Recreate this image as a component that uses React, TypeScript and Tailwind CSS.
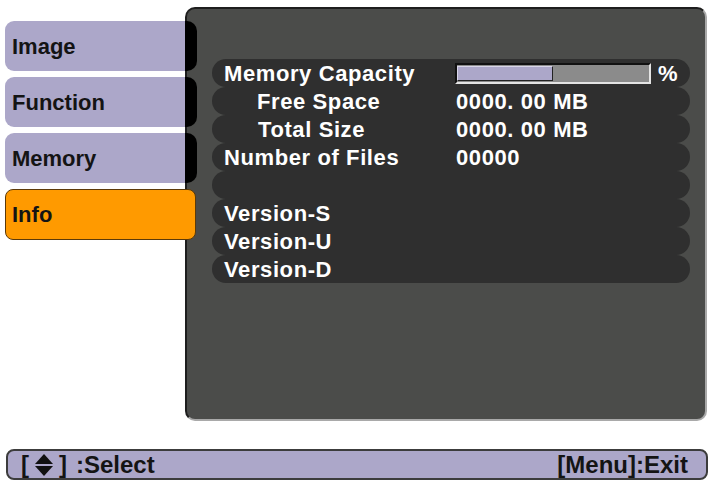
import React from "react";

type Row = { label: string; indent?: number; value?: React.ReactNode };

const tabs = ["Image", "Function", "Memory"];

function UpDown() {
  return (
    <svg width="18" height="22" viewBox="0 0 18 22" className="mx-[6px]">
      <path d="M9 0 L18 10 L0 10 Z" fill="#111" />
      <path d="M0 12 L18 12 L9 22 Z" fill="#111" />
    </svg>
  );
}

function CapacityBar() {
  return (
    <div className="flex items-center -ml-[1px]">
      <div className="w-[196px] h-[21px] bg-[#8b8b8b] border-t-2 border-l-2 border-t-[#111] border-l-[#111] border-b-2 border-r-2 border-b-[#e4e4e4] border-r-[#e4e4e4] flex items-center">
        <div className="w-[96px] h-[15px] bg-[#aca7c9] border border-t-[#d8d5e8] border-l-[#d8d5e8] border-b-[#222] border-r-[#222]" />
      </div>
      <span className="ml-[7px]">%</span>
    </div>
  );
}

const rows: Row[] = [
  { label: "Memory Capacity", value: <CapacityBar /> },
  { label: "Free Space", indent: 33, value: "0000. 00 MB" },
  { label: "Total Size", indent: 34, value: "0000. 00 MB" },
  { label: "Number of Files", value: "00000" },
  { label: "" },
  { label: "Version-S" },
  { label: "Version-U" },
  { label: "Version-D" },
];

export default function App() {
  return (
    <div className="w-[715px] h-[484px] bg-white overflow-hidden font-['Liberation_Sans',Arial,sans-serif] font-bold">
      <div className="flex pt-[7px]">
        {/* menu tabs */}
        <div className="relative z-10 w-[197px] -mr-[12px] pl-[5px] pt-[14px] flex flex-col gap-[6px]">
          {tabs.map((t) => (
            <div key={t} className="flex h-[50px]">
              <div className="w-[180px] bg-[#aca7c9] rounded-l-[9px] flex items-center pl-[7px] text-[22px] text-[#141414]">
                {t}
              </div>
              <div className="w-[12px] bg-black rounded-r-[10px]" />
            </div>
          ))}
          <div className="h-[51px] w-[191px] bg-[#ff9a00] rounded-[8px] border border-[#5c3a08] flex items-center pl-[6px] text-[22px] text-[#141414]">
            Info
          </div>
        </div>

        {/* info panel */}
        <div className="w-[522px] h-[414px] bg-[#4b4c4a] rounded-[10px] border-2 border-t-[#1e1e1e] border-l-[#1e1e1e] border-r-[#a9a9a9] border-b-[#a9a9a9] pt-[50px] pl-[25px]">
          <div className="w-[478px] flex flex-col">
            {rows.map((r, i) => (
              <div
                key={i}
                className="h-[28px] rounded-full bg-[#2f2f2f] flex items-center pl-[12px] text-white text-[22px] tracking-[0.6px]"
              >
                <div className="w-[232px] whitespace-pre" style={{ paddingLeft: r.indent ?? 0 }}>
                  {r.label}
                </div>
                {r.value !== undefined && <div className="whitespace-pre">{r.value}</div>}
              </div>
            ))}
          </div>
        </div>
      </div>

      {/* key help bar */}
      <div className="mt-[28px] ml-[6px] w-[702px] h-[31px] bg-[#aca7c9] border-2 border-[#3c3c3c] rounded-[8px] flex items-center justify-between pl-[13px] pr-[18px] text-[24px] leading-none text-[#141414]">
        <div className="flex items-center">
          <span>[</span>
          <UpDown />
          <span>]</span>
          <span className="ml-[9px]">:Select</span>
        </div>
        <span>[Menu]:Exit</span>
      </div>
    </div>
  );
}
